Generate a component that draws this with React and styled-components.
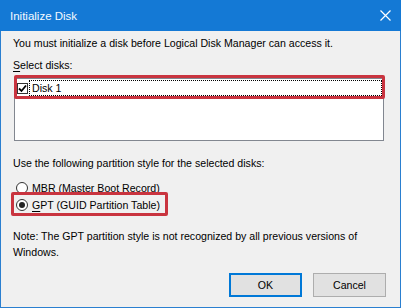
import React from 'react';
import styled, { createGlobalStyle } from 'styled-components';

const Global = createGlobalStyle`
  html, body {
    margin: 0;
    padding: 0;
    background: #f0f0f0;
  }
  body {
    font-family: "Liberation Sans", Arial, sans-serif;
    font-size: 10.6px;
    color: #000;
  }
`;

const Window = styled.div`
  width: 401px;
  height: 308px;
  box-sizing: border-box;
  border: 1px solid #2a7fd0;
  border-top: none;
  background: #f0f0f0;
  display: flex;
  flex-direction: column;
`;

const TitleBar = styled.div`
  height: 31px;
  margin: 0 -1px;
  background: #1479d5;
  display: flex;
  align-items: center;
  justify-content: space-between;
  padding: 0 10px;
  color: #f4f9ff;
  font-size: 11.5px;
`;

const Close = styled.svg`
  width: 11px;
  height: 11px;
`;

const Body = styled.div`
  flex: 1;
  display: flex;
  flex-direction: column;
  padding: 4px 16px 0 12px;
`;

const Text = styled.div`
  line-height: 16px;
  margin-top: ${p => p.$mt || 0}px;
  white-space: nowrap;
`;

const Key = styled.span`
  text-decoration: underline;
  text-underline-offset: 2px;
`;

const ListBox = styled.div`
  margin: 5px 0 0 1px;
  height: 63px;
  box-sizing: border-box;
  border: 1px solid #828790;
  background: #fff;
  padding: 1px;
`;

const Row = styled.div`
  position: relative;
  display: flex;
  align-items: center;
  height: 16px;
  gap: 1px;
  padding-left: 1px;
`;

// red annotation frame drawn over the screenshot
const Highlight = styled.div`
  position: absolute;
  left: ${p => p.$l}px;
  top: ${p => p.$t}px;
  bottom: ${p => p.$b}px;
  ${p => (p.$w ? `width: ${p.$w}px;` : `right: ${p.$r}px;`)}
  box-sizing: border-box;
  border: 3px solid #c9343f;
  border-radius: 2px;
  pointer-events: none;
`;

const Check = styled.span`
  width: 11px;
  height: 11px;
  box-sizing: border-box;
  border: 1px solid #333;
  background: #fff;
  display: flex;
  align-items: center;
  justify-content: center;
`;

const Focus = styled.span`
  flex: 1;
  align-self: stretch;
  display: flex;
  align-items: center;
  border: 1px dotted #000;
  padding: 0 2px;
`;

const Radios = styled.div`
  display: flex;
  flex-direction: column;
  gap: 2px;
  margin-top: 9px;
  padding-left: 3px;
`;

const RadioRow = styled.div`
  position: relative;
  display: flex;
  align-items: center;
  gap: 4px;
  height: 15px;
`;

const Radio = styled.span`
  width: 12px;
  height: 12px;
  box-sizing: border-box;
  border-radius: 50%;
  border: 1px solid #333;
  background: #fff;
  display: flex;
  align-items: center;
  justify-content: center;
  &::after {
    content: '';
    width: 6px;
    height: 6px;
    border-radius: 50%;
    background: ${p => (p.$on ? '#222' : 'transparent')};
  }
`;

const Buttons = styled.div`
  display: flex;
  justify-content: flex-end;
  gap: 11px;
  margin: auto -2px 10px 0;
`;

const Button = styled.div`
  width: 73px;
  height: 24px;
  box-sizing: border-box;
  display: flex;
  align-items: center;
  justify-content: center;
  background: #e1e1e1;
  border: ${p => (p.$default ? '2px solid #0078d7' : '1px solid #adadad')};
`;

export default function App() {
  return (
    <>
      <Global />
      <Window>
        <TitleBar>
          <span>Initialize Disk</span>
          <Close viewBox="0 0 11 11">
            <path d="M0.5 0.5 L10.5 10.5 M10.5 0.5 L0.5 10.5" stroke="#fff" strokeWidth="1.2" />
          </Close>
        </TitleBar>
        <Body>
          <Text>You must initialize a disk before Logical Disk Manager can access it.</Text>
          <Text $mt={6}>
            <Key>S</Key>elect disks:
          </Text>
          <ListBox>
            <Row>
              <Highlight $l={-2} $t={-5} $r={-3} $b={-3} />
              <Check>
                <svg width="9" height="9" viewBox="0 0 9 9">
                  <path d="M1 4.5 L3.5 7 L8 1.5" stroke="#000" strokeWidth="1.8" fill="none" />
                </svg>
              </Check>
              <Focus>Disk 1</Focus>
            </Row>
          </ListBox>
          <Text $mt={14}>Use the following partition style for the selected disks:</Text>
          <Radios>
            <RadioRow>
              <Radio />
              <span>
                <Key>M</Key>BR (Master Boot Record)
              </span>
            </RadioRow>
            <RadioRow>
              <Highlight $l={-5} $t={-5} $w={157} $b={-4} />
              <Radio $on />
              <span>
                <Key>G</Key>PT (GUID Partition Table)
              </span>
            </RadioRow>
          </Radios>
          <Text $mt={16}>Note: The GPT partition style is not recognized by all previous versions of</Text>
          <Text>Windows.</Text>
          <Buttons>
            <Button $default>OK</Button>
            <Button>Cancel</Button>
          </Buttons>
        </Body>
      </Window>
    </>
  );
}
